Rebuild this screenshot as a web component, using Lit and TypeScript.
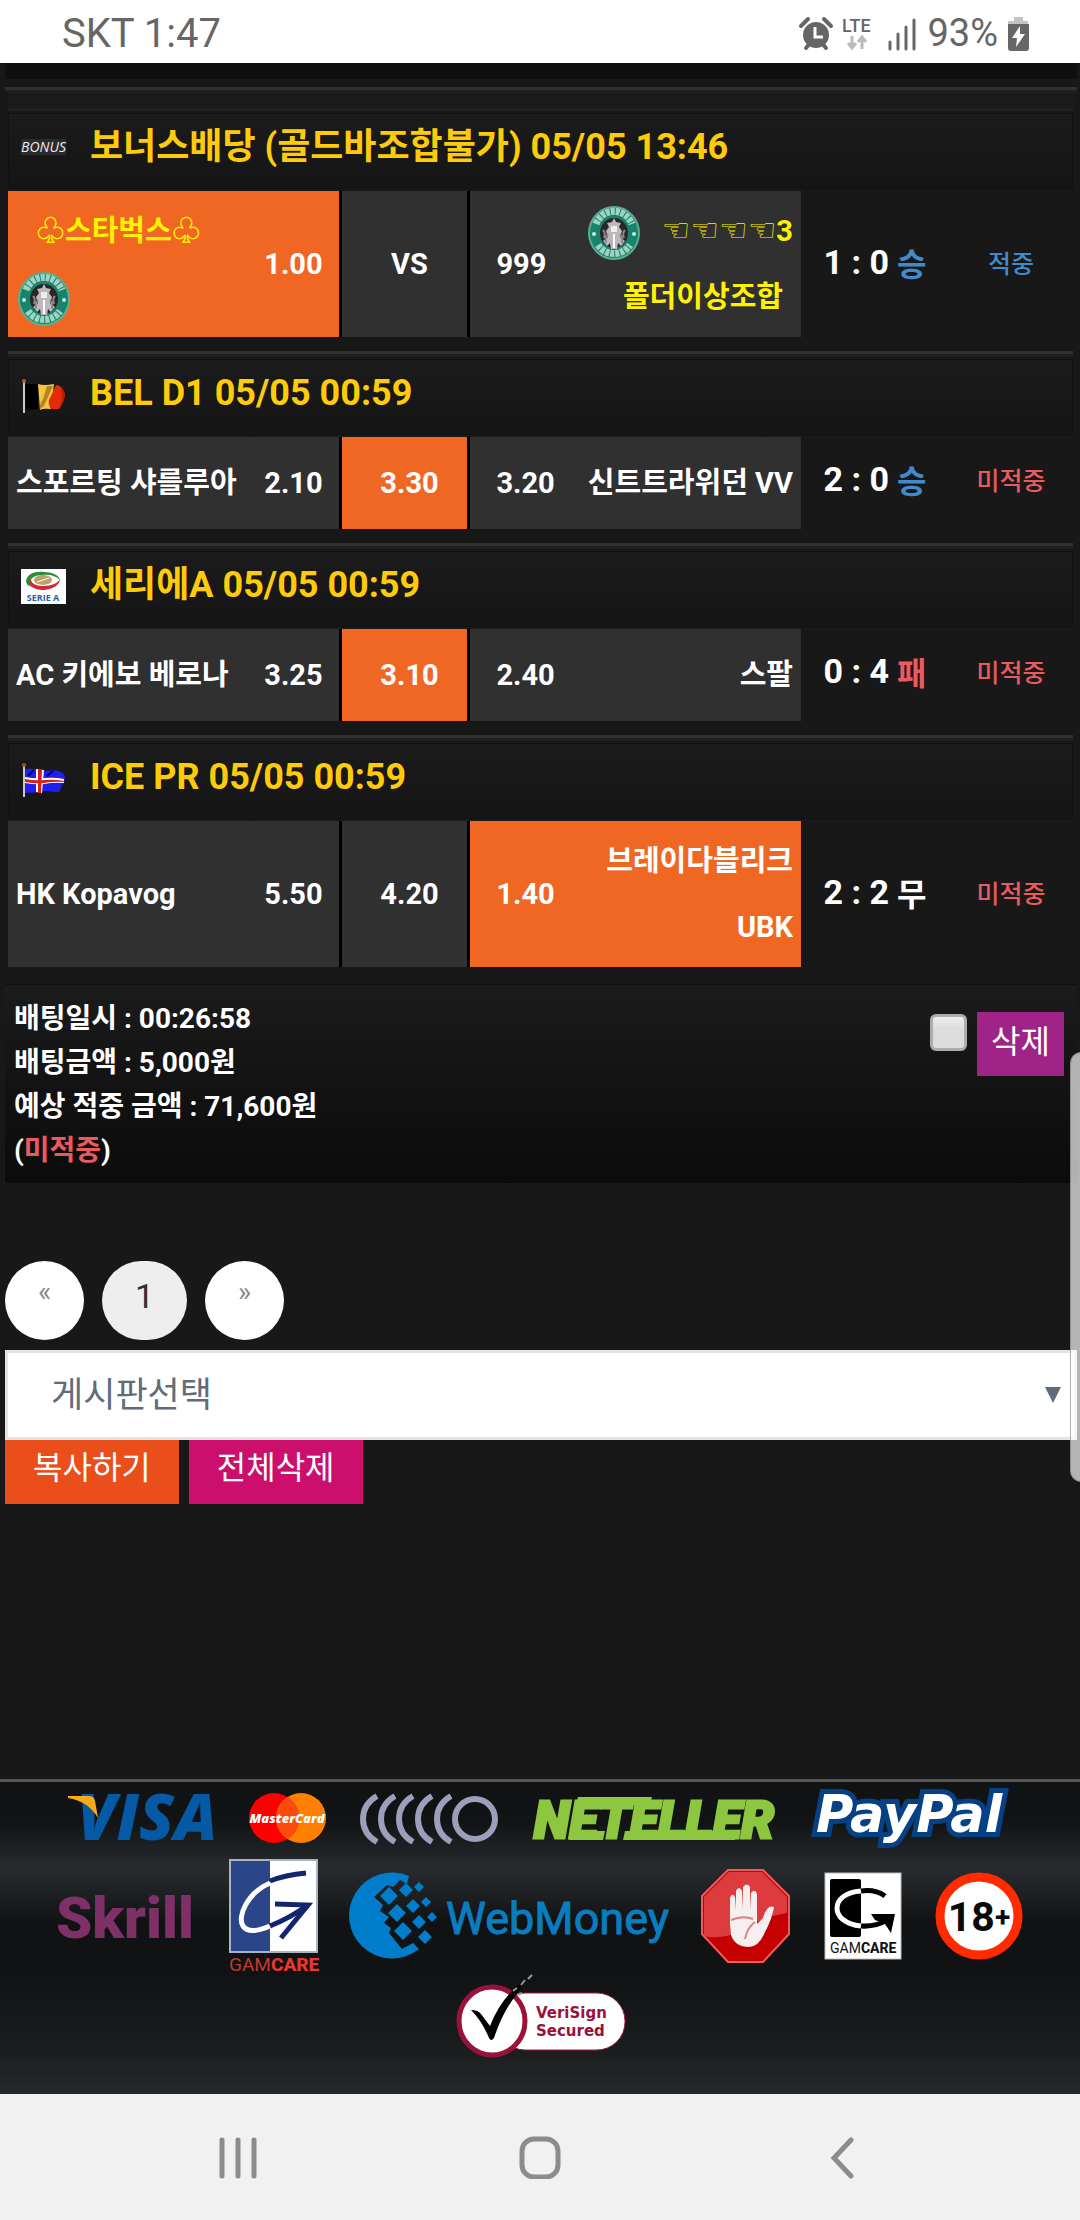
import { LitElement, html, svg, css, nothing, TemplateResult } from "lit";
import { customElement, property } from "lit/decorators.js";
import { classMap } from "lit/directives/class-map.js";

type Pick = "home" | "draw" | "away";
type Tone = "win" | "lose" | "even";

interface Match {
  icon: TemplateResult;
  league: string;
  home: TemplateResult | string;
  homeOdds: string;
  draw: string;
  away: TemplateResult | string;
  awayOdds: string;
  pick: Pick;
  score: string;
  outcome: string;
  tone: Tone;
  hit: boolean;
  compact?: boolean;
}

const starbucks = html`<svg class="crest" viewBox="0 0 52 54" width="52" height="54" role="img" aria-label="Starbucks Coffee">
  <ellipse cx="26" cy="27" rx="26" ry="27" fill="#5aae96"></ellipse>
  <ellipse cx="26" cy="27" rx="24" ry="25" fill="#16836a"></ellipse>
  <g fill="none" stroke="#9fd2c2" stroke-width="7">
    <path d="M8 18A19.500 20.500 0 0 1 44 18" stroke-dasharray="4 1"></path>
    <path d="M10 39A19.500 20 0 0 0 42 39" stroke-dasharray="4 1"></path>
  </g>
  <circle cx="6" cy="28" r="2" fill="#cfe9df"></circle>
  <circle cx="46" cy="28" r="2" fill="#cfe9df"></circle>
  <ellipse cx="26" cy="27" rx="14" ry="15" fill="#2b2527"></ellipse>
  <path d="M26 12l2 4 5 1-2 4 3 4-2 6 5 4-4 5-3-3-1 6h-6l-1-6-3 3-4-5 5-4-2-6 3-4-2-4 5-1z" fill="#bdb8ba"></path>
  <path d="M23 20h6v6h-6z" fill="#efedee"></path>
  <path d="M25 28h2v14h-2z" fill="#fff"></path>
  <path d="M15 24q3 3 1 8M37 24q-3 3-1 8M20 28q-3 4-2 9M32 28q3 4 2 9" fill="none" stroke="#8d8789" stroke-width="2"></path>
</svg>`;

const bonusIcon = html`<span class="bonus" aria-hidden="true">BONUS</span>`;

const belgium = html`<svg viewBox="0 0 45 40" width="45" height="40" aria-hidden="true">
  <path d="M4 11h13v25l-12 1z" fill="#000"></path>
  <path d="M17 11q6 2 16 0l-3 25q-8-1-11 1z" fill="#f7c63c"></path>
  <path d="M26 13l6 0-9 20-4 3q-1-4 3-10z" fill="#8a5a12" opacity=".6"></path>
  <path d="M35 12q6 0 9 9-1 8-6 15-5 1-9-1-2-6-1-8 3-6 7-15z" fill="#e62a0c"></path>
  <path d="M40 14q4 4 4 8-1 7-5 12 1-4 2-8z" fill="#b81a06"></path>
  <path d="M2 8h2v32h-2z" fill="#c9c9c9"></path><circle cx="3" cy="8" r="2" fill="#9a6a24"></circle>
</svg>`;

const iceland = html`<svg viewBox="0 0 45 40" width="45" height="40" aria-hidden="true">
  <path d="M4 12q9-1 20 2 10-2 16 1 4 2 4 7l-6 13q-6 0-13-1-10 2-21 2z" fill="#1f1ff0"></path>
  <path d="M4 20q10 2 20 1t19 1v4q-10-1-20 1-9 1-19-1z" fill="#fff"></path>
  <path d="M15 12l8 1-2 23-6-1z" fill="#fff"></path>
  <path d="M4 22q10 2 20 1t19 1v1q-10-1-20 1-9 1-19-1z" fill="#d8201a"></path>
  <path d="M17 12h4l-1 24h-3z" fill="#d8201a"></path>
  <path d="M7 19l6-6M26 19l6-5" stroke="#00007a" stroke-width="2"></path>
  <path d="M2 8h2v32h-2z" fill="#c9c9c9"></path><circle cx="3" cy="8" r="2" fill="#9a5a24"></circle>
</svg>`;

const serieA = html`<svg viewBox="0 0 45 38" width="45" height="38" role="img" aria-label="Serie A">
  <rect y="3" width="45" height="35" fill="#fff"></rect>
  <path d="M5 15C6 8 14 5 23 6c8 0 15 3 16 8-4-4-10-6-17-5-8 0-13 3-13 8 0 2 1 3 2 4-4-1-6-3-6-6z" fill="#2c8e3a"></path>
  <path d="M39 13c0 6-7 10-16 11-6 0-9-1-12-3-3-3-3-6-1-8 0 4 4 7 12 7 9 0 15-3 17-7z" fill="#d2293a"></path>
  <ellipse cx="22" cy="14" rx="9" ry="5" fill="#b9a36a"></ellipse>
  <path d="M16 16l12-4" stroke="#fff" stroke-width="1"></path>
  <text x="22" y="35" text-anchor="middle" class="tiny" fill="#1f5fa8">SERIE A</text>
</svg>`;

const MATCHES: Match[] = [
  {
    icon: bonusIcon,
    league: "보너스배당 (골드바조합불가) 05/05 13:46",
    home: html`<span class="promo lead">♧스타벅스♧</span><br />${starbucks}`,
    homeOdds: "1.00",
    draw: "VS",
    away: html`${starbucks}<span class="promo gap"><span class="hands">☜☜☜☜</span>3</span><br /><span class="promo tail">폴더이상조합</span>`,
    awayOdds: "999",
    pick: "home",
    score: "1 : 0",
    outcome: "승",
    tone: "win",
    hit: true,
  },
  {
    icon: belgium,
    league: "BEL D1 05/05 00:59",
    home: "스포르팅 샤를루아",
    homeOdds: "2.10",
    draw: "3.30",
    away: "신트트라위던 VV",
    awayOdds: "3.20",
    pick: "draw",
    score: "2 : 0",
    outcome: "승",
    tone: "win",
    hit: false,
    compact: true,
  },
  {
    icon: serieA,
    league: "세리에A 05/05 00:59",
    home: "AC 키에보 베로나",
    homeOdds: "3.25",
    draw: "3.10",
    away: "스팔",
    awayOdds: "2.40",
    pick: "draw",
    score: "0 : 4",
    outcome: "패",
    tone: "lose",
    hit: false,
    compact: true,
  },
  {
    icon: iceland,
    league: "ICE PR 05/05 00:59",
    home: "HK Kopavog",
    homeOdds: "5.50",
    draw: "4.20",
    away: html`브레이다블리크<br />UBK`,
    awayOdds: "1.40",
    pick: "away",
    score: "2 : 2",
    outcome: "무",
    tone: "even",
    hit: false,
  },
];

@customElement("status-bar")
export class StatusBar extends LitElement {
  static styles = css`
    :host { display: flex; align-items: center; justify-content: space-between; height: 63px; padding: 4px 51px 0 62px;
      background: #fff; color: #666; font: 38px/59px Roboto, sans-serif; box-sizing: border-box; }
    .carrier { font-size: 40px; }
    .right { display: flex; align-items: center; gap: 11px; }
    .near { display: flex; align-items: center; gap: 10px; }
    .lte { font: 500 18px Roboto, sans-serif; }
    svg { display: block; overflow: visible; }
  `;
  render() {
    return html`<span class="carrier">SKT 1:47</span>
      <span class="right">
        <svg width="78" height="34" viewBox="0 0 78 34" role="img" aria-label="Alarm, LTE">
          <circle cx="17" cy="18" r="13" fill="#666"></circle>
          <path d="M2 9l7-7M32 9l-7-7M7 31l4-5M27 31l-4-5" stroke="#666" stroke-width="4" stroke-linecap="round"></path>
          <path d="M16 10v10h8" fill="none" stroke="#fff" stroke-width="3"></path>
          <text x="43" y="15" class="lte" fill="#666">LTE</text>
          <path d="M53 19v11M49 26l4 5 4-5M63 32v-11M59 25l4-5 4 5" fill="none" stroke="#bbb" stroke-width="3"></path>
        </svg>
        <svg width="28" height="32" viewBox="0 0 28 32" role="img" aria-label="Signal">
          <path d="M2 24v7M10 16v15M18 9v22M26 2v29" stroke="#666" stroke-width="3" stroke-linecap="round"></path>
        </svg>
        <span class="near">
          <span>93%</span>
          <svg width="21" height="34" viewBox="0 0 21 34" role="img" aria-label="Charging">
            <path d="M6 0h9v4h5v4H0V4h6z" fill="#c4c4c4"></path>
            <path d="M0 7h21v24q0 3-3 3H3q-3 0-3-3z" fill="#666"></path>
            <path d="M12 9L4 21h5l-1 9 9-13h-5z" fill="#fff"></path>
          </svg>
        </span>
      </span>`;
  }
}

@customElement("match-row")
export class MatchRow extends LitElement {
  @property({ attribute: false }) match!: Match;
  static styles = css`
    :host { display: block; color: #fff; font-family: Roboto, "Noto Sans CJK KR", sans-serif; }
    .league { display: flex; align-items: center; gap: 24px; height: 76px; margin: 0 0 2px; padding: 0 12px 8px;
      box-sizing: border-box; border: 1px solid #111; background: linear-gradient(#1b1b1b, #151515);
      color: #fecb0a; font-size: 36px; font-weight: 700; line-height: 64px; }
    .bonus { width: 45px; height: 16px; background: #2b2b2e; color: #eee; text-align: center;
      font: italic 14px/16px "Open Sans", sans-serif; }
    .tiny { font: 700 9px "Open Sans", sans-serif; }
    .row { display: grid; grid-template-columns: 793fr 146fr 126fr; }
    .odds { display: grid; grid-template-columns: 331fr 126fr 331fr; gap: 3px; background: #000;
      font-size: 29px; font-weight: 700; line-height: 66px; }
    .cell { display: flex; align-items: center; justify-content: space-between; min-height: 92px; padding: 7px 8px;
      box-sizing: border-box; background: #303030; white-space: nowrap; }
    .home { padding-right: 16px; }
    .away { padding-left: 26px; text-align: right; }
    .draw { justify-content: center; padding-left: 18px; }
    .picked { background: #f06724; }
    .promo { color: #fff200; }
    .lead { padding-left: 20px; }
    .gap { padding-left: 20px; }
    .tail { padding-right: 10px; }
    .crest { vertical-align: middle; padding: 0 2px; }
    .hands { font-family: "DejaVu Sans", sans-serif; font-size: 32px; line-height: 32px; }
    .score, .state { display: flex; align-items: center; justify-content: center; gap: 8px; padding-bottom: 4px; white-space: nowrap; }
    .compact .score, .compact .state { padding-bottom: 8px; }
    .score { padding-left: 2px; font-size: 34px; font-weight: 700; }
    .outcome { font-weight: 700; font-size: 32px; }
    .state { padding-left: 2px; font-size: 25px; font-weight: 500; }
    .win, .hit { color: #428bca; }
    .lose, .miss { color: #ea5a5e; }
  `;
  render() {
    const m = this.match;
    const cell = (p: Pick) => classMap({ cell: true, [p]: true, picked: m.pick === p });
    return html`<h2 class="league">${m.icon}<span>${m.league}</span></h2>
      <div class=${classMap({ row: true, compact: !!m.compact })}>
        <div class="odds">
          <div class=${cell("home")}><span>${m.home}</span><span>${m.homeOdds}</span></div>
          <div class=${cell("draw")}>${m.draw}</div>
          <div class=${cell("away")}><span>${m.awayOdds}</span><span>${m.away}</span></div>
        </div>
        <div class="score"><span>${m.score}</span><span class="outcome ${m.tone}">${m.outcome}</span></div>
        <div class="state ${m.hit ? "hit" : "miss"}">${m.hit ? "적중" : "미적중"}</div>
      </div>`;
  }
}

@customElement("payment-footer")
export class PaymentFooter extends LitElement {
  static styles = css`
    :host { display: flex; flex-direction: column; align-items: center; box-sizing: border-box; min-height: 315px; padding: 7px 0 34px;
      border-top: 3px solid #555;
      background: linear-gradient(#111213 0, #121314 40px, #262a2d 82px, #26292c 92px, #111214 140px, #111213 190px, #1c1d1f 270px, #252a2d 312px); }
    .line { display: flex; flex-wrap: wrap; align-items: center; justify-content: center; gap: 34px; }
    .second { gap: 35px; padding: 12px 0 3px; }
    svg { display: block; overflow: visible; }
    .visa { font: italic 800 64px "Open Sans", sans-serif; }
    .mc { font: italic 800 13px "Open Sans", sans-serif; }
    .neteller { font: italic 900 52px Roboto, sans-serif; }
    .paypal { font: italic 700 51px "DejaVu Sans", sans-serif; }
    .skrill { font: 900 58px Roboto, sans-serif; }
    .web { font: 400 45px Roboto, sans-serif; }
    .gam { font: 400 19px Roboto, sans-serif; }
    .care { font-weight: 800; }
    .gams { font: 400 14px Roboto, sans-serif; }
    .age { font: 700 41px Roboto, sans-serif; }
    .plus { font-size: 28px; }
    .veri { font: 700 15px "DejaVu Sans", sans-serif; }
  `;
  render() {
    const arcs = [0, 18, 36, 55, 74];
    const dots = [
      [36, 23, 9], [53, 17, 7], [66, 14, 5], [44, 40, 9], [60, 33, 7], [73, 29, 5],
      [50, 58, 9], [66, 49, 7], [79, 44, 5], [72, 64, 7],
    ];
    return html`
      <div class="line">
        <svg width="147" height="52" viewBox="0 0 147 52" role="img" aria-label="Visa">
          <text class="visa" x="9" y="48" fill="#0659a5">VISA</text>
          <path d="M0 4h21q5 0 6 5l3 17Q20 9 0 6z" fill="#fbab18"></path>
        </svg>
        <svg width="77" height="52" viewBox="0 0 77 52" role="img" aria-label="MasterCard">
          <circle cx="25" cy="26" r="25" fill="#fe0000"></circle>
          <circle cx="52" cy="26" r="25" fill="#ff7f00"></circle>
          <path d="M39 5a25 25 0 0 1 0 42a25 25 0 0 1 0-42" fill="#f94b0c"></path>
          <text class="mc" x="38" y="31" text-anchor="middle" fill="#fff">MasterCard</text>
        </svg>
        <svg width="139" height="52" viewBox="0 0 139 52" role="img" aria-label="Diners Club">
          <g fill="none" stroke="#9b9fba" stroke-width="6">
            ${arcs.map((x) => svg`<path d="M${x + 17} 4Q${x + 3} 12 ${x + 3} 27Q${x + 3} 42 ${x + 17} 50"></path>`)}
            <circle cx="115" cy="27" r="20"></circle>
          </g>
        </svg>
        <svg width="244" height="52" viewBox="0 0 244 52" role="img" aria-label="Neteller">
          <text class="neteller" x="1" y="46" fill="#8dc63f" stroke="#8dc63f" stroke-width="3">NETELLER</text>
          <path d="M45 5h74l-2 8H43zM38 39h34l-2 9H36zM92 39h112l-2 9H90z" fill="#8dc63f"></path>
        </svg>
        <svg width="202" height="58" viewBox="0 0 202 58" role="img" aria-label="PayPal">
          <text class="paypal" x="5" y="43" fill="#fff" stroke="#064186" stroke-width="10" stroke-linejoin="miter" paint-order="stroke">PayPal</text>
        </svg>
      </div>
      <div class="line second">
        <svg width="137" height="54" viewBox="0 0 137 54" role="img" aria-label="Skrill">
          <text class="skrill" x="-1" y="49" fill="#7d3167">Skrill</text>
        </svg>
        <svg width="89" height="113" viewBox="0 0 89 113" role="img" aria-label="GamCare">
          <rect width="89" height="94" fill="#a9b3c4"></rect>
          <rect x="2" y="2" width="39" height="90" fill="#2a4689"></rect>
          <rect x="41" y="2" width="46" height="90" fill="#fff"></rect>
          <path d="M41 24C18 34 8 58 14 67q6 9 27 0" fill="none" stroke="#fff" stroke-width="5"></path>
          <path d="M41 22q15-6 36-8M41 67q20-8 38-21" fill="none" stroke="#12256e" stroke-width="5"></path>
          <path d="M46 45l33 1-27 33" fill="none" stroke="#12256e" stroke-width="5"></path>
          <text class="gam" x="0" y="112" fill="#c2392f">GAM<tspan class="care" fill="#e8382d">CARE</tspan></text>
        </svg>
        <svg width="313" height="86" viewBox="0 0 313 86" role="img" aria-label="WebMoney">
          <path d="M56 3A43 43 0 1 0 66 76L60 70 49 76 36 60 38 55 31 50 36 44 27 38 30 32 21 24 34 12 40 14 47 7 54 11z" fill="#007ecb"></path>
          ${dots.map(([x, y, r]) => svg`<path d="M${x} ${y - r}l${r} ${r}l${-r} ${r}l${-r} ${-r}z" fill="#007ecb"></path>`)}
          <text class="web" x="93" y="61" fill="#0a7cc0" stroke="#0a7cc0" stroke-width="1">WebMoney</text>
        </svg>
        <svg width="89" height="94" viewBox="0 0 89 94" role="img" aria-label="Stop">
          <path d="M27 1h35l26 26v38L62 93H27L1 65V27z" fill="#c40000" stroke="#ee5a5a" stroke-width="2"></path>
          <path d="M28 3h33l25 25v16Q60 48 40 62 20 71 3 67V28z" fill="#dd3c3e"></path>
          <path d="M29 55V29q2-6 5-1l1 13V22q3-6 6 0l1 18V18q4-5 7 0v23l1-17q4-5 6 1v30l6-6q4-14 11-11-2 12-9 25Q58 78 48 78 34 78 30 66z" fill="#f6efef"></path>
          <path d="M30 51q12-5 22-1M44 70q2-11 10-17" fill="none" stroke="#e08080" stroke-width="2"></path>
        </svg>
        <svg width="76" height="86" viewBox="0 0 76 86" role="img" aria-label="GamCare">
          <rect width="76" height="86" fill="#fff" stroke="#bbb"></rect>
          <rect x="5" y="6" width="31" height="58" rx="2" fill="#000"></rect>
          <path d="M36 18C4 20 4 50 36 53" fill="none" stroke="#fff" stroke-width="5"></path>
          <path d="M36 18q14-2 24 5M36 53q15 1 26-6" fill="none" stroke="#000" stroke-width="5"></path>
          <path d="M46 41h24l-4 19-6-9-10-4z" fill="#000"></path>
          <text class="gams" x="5" y="80" fill="#111">GAM<tspan class="care">CARE</tspan></text>
        </svg>
        <svg width="87" height="88" viewBox="0 0 87 88" role="img" aria-label="18+">
          <circle cx="43" cy="44" r="39" fill="#fff" stroke="#ff2a00" stroke-width="9"></circle>
          <text class="age" x="43" y="59" text-anchor="middle" fill="#0a0a0a">18<tspan class="plus" dy="-4">+</tspan></text>
        </svg>
      </div>
      <svg width="170" height="82" viewBox="-2 0 170 82" role="img" aria-label="VeriSign Secured">
        <rect x="40" y="18" width="128" height="57" rx="28" fill="#fff" stroke="#a3173d" stroke-width="1"></rect>
        <ellipse cx="35" cy="46" rx="33" ry="34" fill="#fff" stroke="#98123a" stroke-width="5"></ellipse>
        <path d="M14 35q7 0 10 4l9 12Q42 28 58 13l11-9-9 15Q46 36 37 63q-3 4-5 0-7-17-18-28z" fill="#000"></path>
        <path d="M60 20l5-2M56 16l4-3M64 10l4-5M71 4l4-4" stroke="#999" stroke-width="2"></path>
        <text class="veri" x="79" y="43" fill="#98123a">VeriSign</text>
        <text class="veri" x="79" y="61" fill="#98123a">Secured</text>
      </svg>`;
  }
}

@customElement("system-nav")
export class SystemNav extends LitElement {
  static styles = css`
    :host { display: grid; grid-template-columns: repeat(3, 1fr); box-sizing: border-box; height: 126px; padding: 0 87px; background: #f1f1f1; }
    button { display: flex; align-items: center; justify-content: center; border: 0; background: none; }
  `;
  render() {
    const icon = (label: string, shape: TemplateResult) => html`<button aria-label=${label}>
      <svg width="44" height="44" viewBox="0 0 44 44" fill="none" stroke="#8c8c8c" stroke-width="5" stroke-linecap="round">${shape}</svg>
    </button>`;
    return html`
      ${icon("Recents", svg`<path d="M6 5v36M22 5v36M38 5v36"></path>`)}
      ${icon("Home", svg`<rect x="4" y="4" width="36" height="38" rx="12"></rect>`)}
      ${icon("Back", svg`<path d="M31 5L14 23l17 18"></path>`)}`;
  }
}

@customElement("app-root")
export class AppRoot extends LitElement {
  static styles = css`
    :host { display: flex; flex-direction: column; position: relative; min-height: 100vh; overflow: hidden; background: #181818;
      color: #fff; font-family: Roboto, "Noto Sans CJK KR", sans-serif; }
    main { flex: 1; padding: 0 3px 0 5px; }
    .strip { height: 16px; margin-bottom: 8px; background: #0f0f0f; }
    .rule { height: 3px; background: #313131; border-bottom: 3px solid #1f1f1f; }
    .spacer { height: 15px; margin: 0 3px; background: #1a1a1a; border-bottom: 3px solid #202020; }
    .bets { display: flex; flex-direction: column; gap: 14px; padding: 2px 4px 17px 3px; }
    .bet { display: flex; flex-direction: column; gap: 2px; }
    .summary { display: flex; justify-content: space-between; align-items: flex-start; box-sizing: border-box; padding: 12px 13px 10px 9px;
      border-top: 1px solid #101010; background: linear-gradient(#1b1b1b, #0b0b0b);
      font-size: 28px; font-weight: 700; line-height: 44px; }
    .summary p { margin: 0; }
    .miss { color: #ea5a5e; }
    .actions { display: flex; align-items: flex-start; gap: 10px; padding-top: 15px; }
    .check { appearance: none; width: 37px; height: 37px; margin: 2px 0 0; border: 3px solid #acacac; border-radius: 6px;
      background: linear-gradient(#efefef, #dcdcdc 35%); }
    .btn { height: 64px; padding: 0 28px 9px; border: 0; color: #fff; font: inherit; font-size: 32px; font-weight: 400; line-height: 54px; }
    .small { padding: 0 14px 5px; background: #a02387; }
    .copy { background: #e94e1b; }
    .clear { background: #cc0e6c; }
    .pager { display: flex; gap: 18px; padding: 78px 0 10px; }
    .page { width: 79px; height: 79px; box-sizing: border-box; padding-bottom: 15px; border-radius: 40px; background: #fff; color: #868b90;
      font-size: 28px; line-height: 62px; text-align: center; text-decoration: none; }
    .current { width: 85px; background: #eee; color: #333; font-size: 34px; line-height: 70px; }
    .board { position: relative; display: block; }
    .board select { appearance: none; display: block; width: 100%; height: 90px; box-sizing: border-box; padding: 0 44px 0 43px; border: 3px solid #e4e4e4; border-radius: 0;
      background: #fff; color: #606c7a; font: 35px Roboto, "Noto Sans CJK KR", sans-serif; }
    .arrow { position: absolute; right: 16px; top: 37px; pointer-events: none; }
    .tools { display: flex; gap: 10px; }
    .thumb { position: absolute; top: 1052px; right: -13px; width: 23px; height: 430px; box-sizing: border-box; border: 1px solid rgba(120, 120, 120, 0.6);
      border-radius: 14px; background: rgba(255, 255, 255, 0.68); }
    payment-footer, system-nav, status-bar { flex: none; }
  `;
  render() {
    return html`
      <status-bar></status-bar>
      <main>
        <div class="strip"></div>
        <div class="rule"></div>
        <div class="spacer"></div>
        <section class="bets">
          ${MATCHES.map((m, i) => html`<div class="bet">
            ${i ? html`<div class="rule"></div>` : nothing}
            <match-row .match=${m}></match-row>
          </div>`)}
        </section>
        <section class="summary">
          <div>
            <p>배팅일시 : 00:26:58</p>
            <p>배팅금액 : 5,000원</p>
            <p>예상 적중 금액 : 71,600원</p>
            <p>(<span class="miss">미적중</span>)</p>
          </div>
          <div class="actions">
            <input class="check" type="checkbox" aria-label="선택" />
            <button class="btn small">삭제</button>
          </div>
        </section>
        <nav class="pager" aria-label="페이지">
          <a class="page" href="#prev">«</a>
          <a class="page current" href="#1">1</a>
          <a class="page" href="#next">»</a>
        </nav>
        <label class="board">
          <select aria-label="게시판선택"><option>게시판선택</option></select>
          <svg class="arrow" width="16" height="16" viewBox="0 0 16 16" aria-hidden="true"><path d="M0 0h16L8 16z" fill="#606c7a"></path></svg>
        </label>
        <div class="tools">
          <button class="btn copy">복사하기</button>
          <button class="btn clear">전체삭제</button>
        </div>
      </main>
      <payment-footer></payment-footer>
      <system-nav></system-nav>
      <div class="thumb"></div>`;
  }
}
